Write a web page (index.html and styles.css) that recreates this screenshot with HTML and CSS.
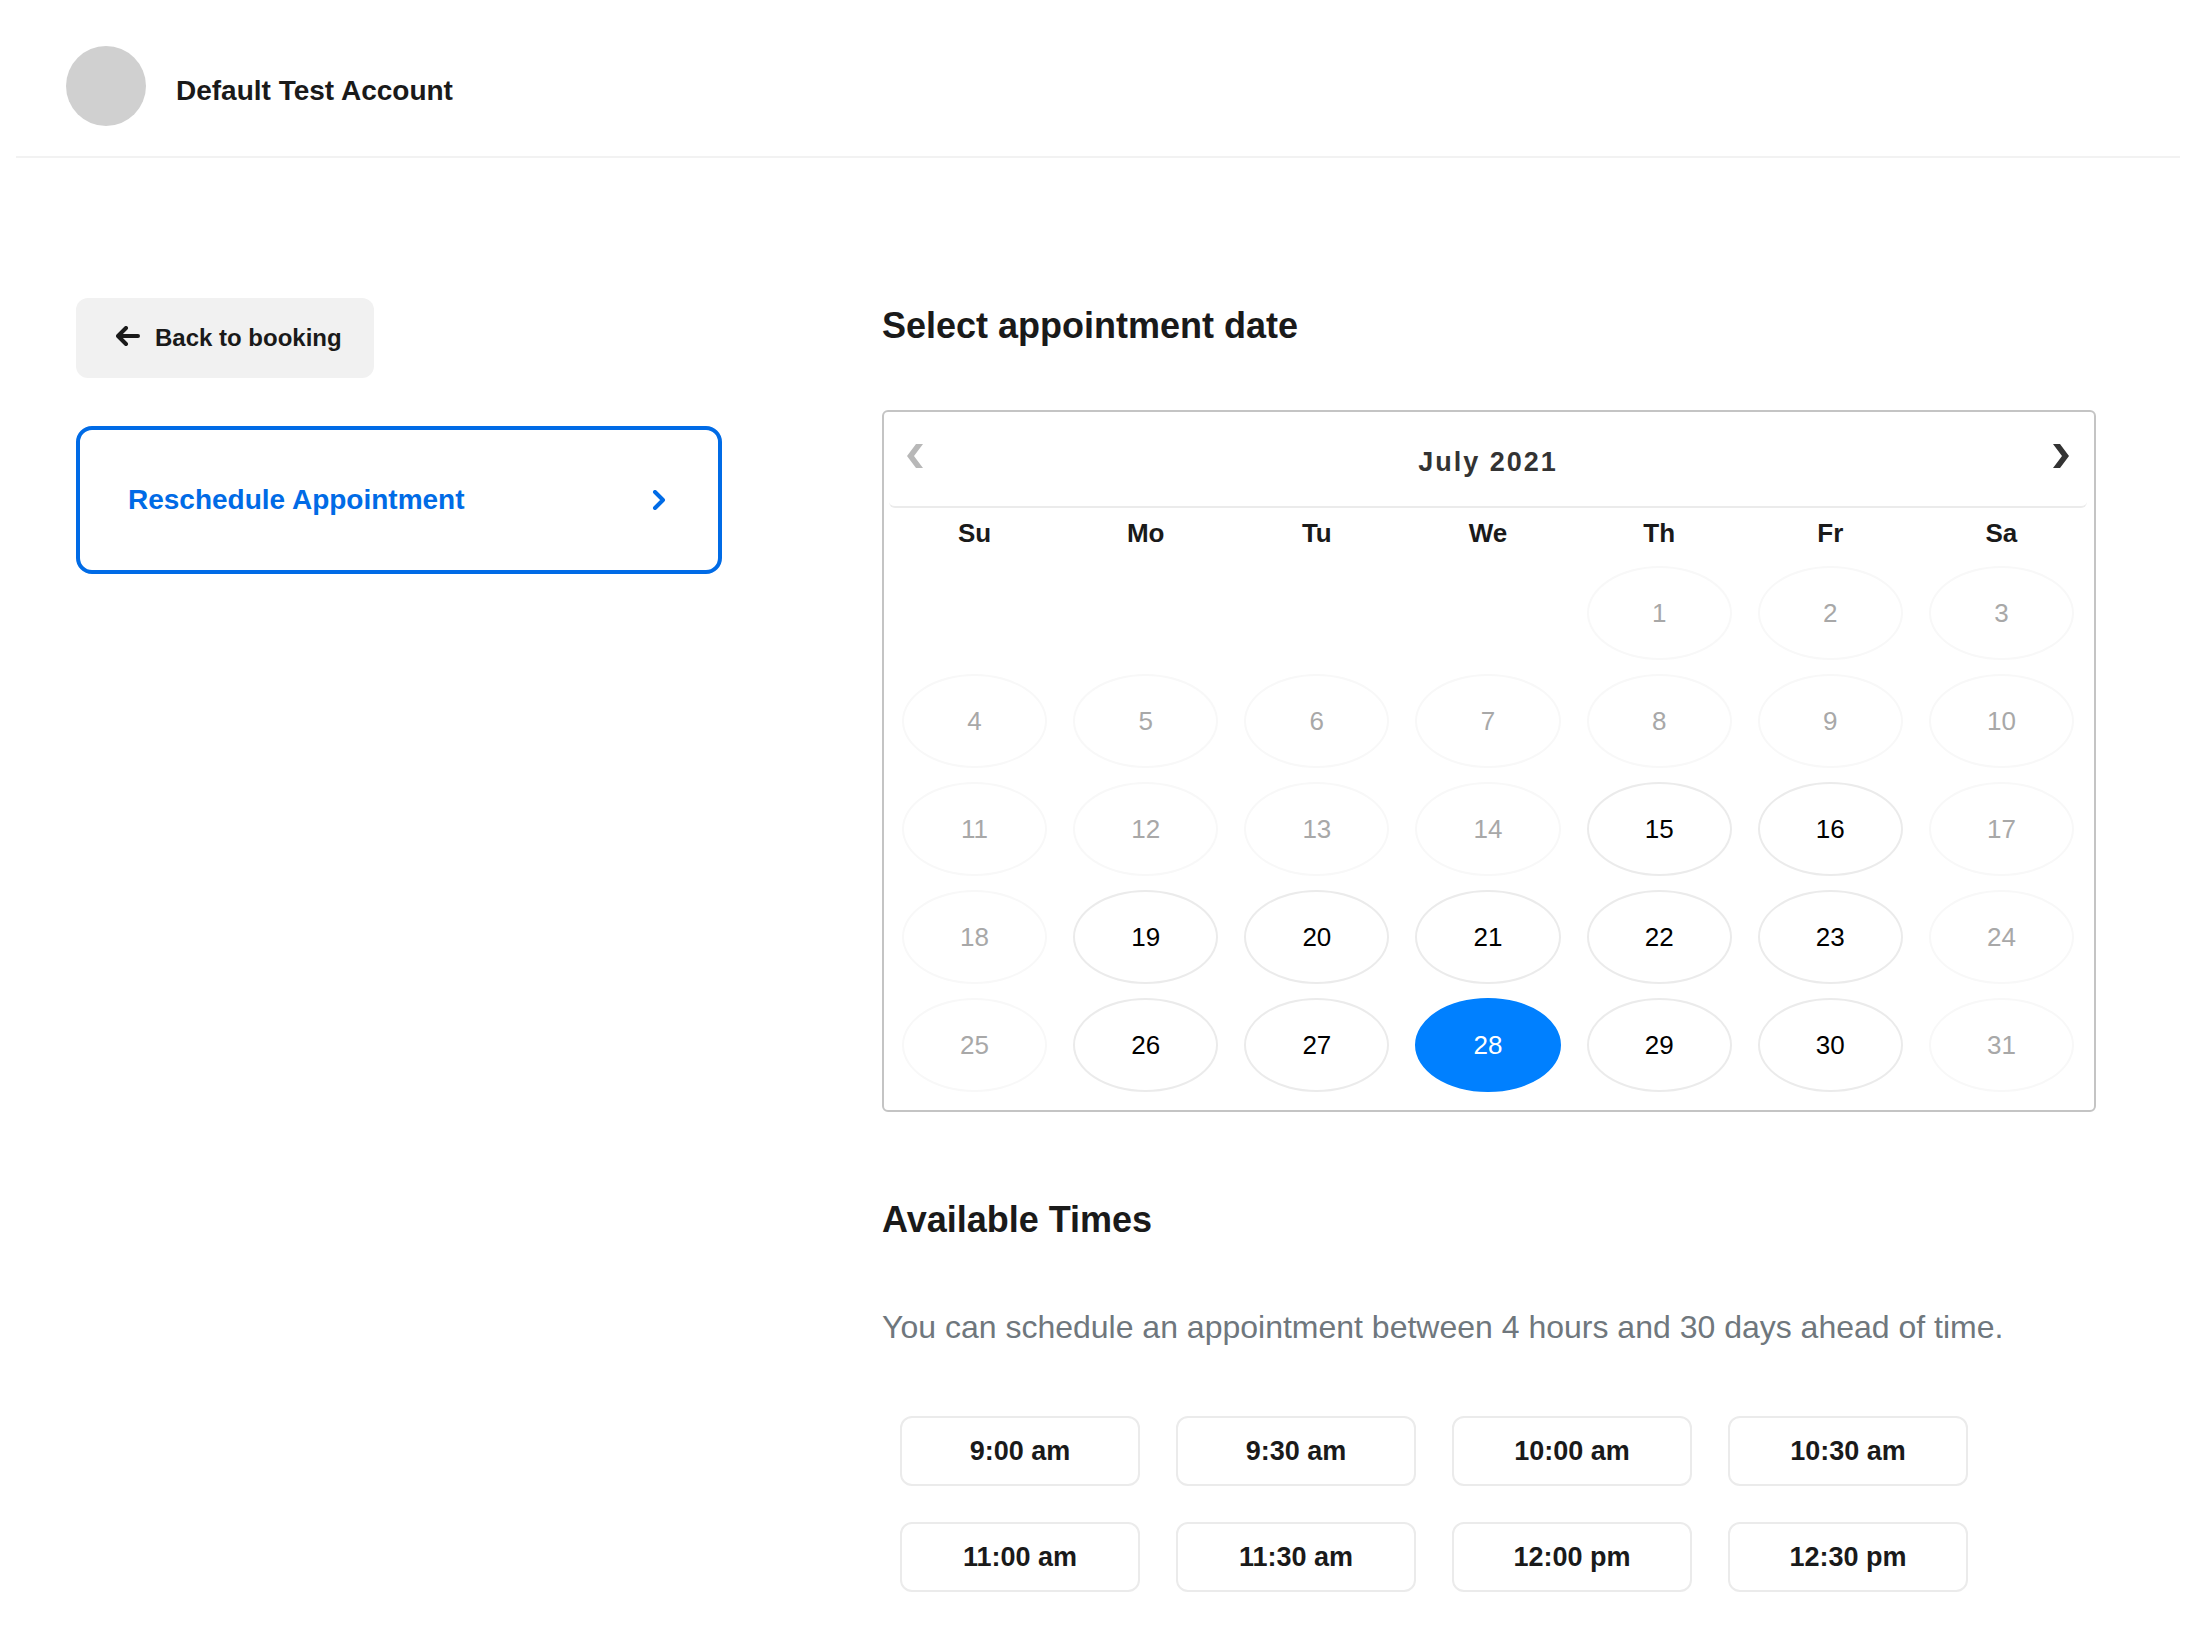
FILE: index.html
```html
<!DOCTYPE html>
<html lang="en">
<head>
  <meta charset="utf-8">
  <meta name="viewport" content="width=device-width, initial-scale=1">
  <title>Reschedule Appointment</title>
  <link rel="stylesheet" href="styles.css">
</head>
<body>
  <header class="site-header">
    <div class="avatar"></div>
    <p class="account-name">Default Test Account</p>
  </header>

  <main class="layout">
    <aside class="sidebar">
      <button type="button" class="back-button">
        <svg width="24" height="24" viewBox="0 0 24 24" fill="none" stroke="currentColor" stroke-width="4" stroke-linecap="round" stroke-linejoin="round" aria-hidden="true"><path d="M22 10H3M10 2L2 10l8 8"/></svg>
        Back to booking
      </button>
      <button type="button" class="action-card">
        <span>Reschedule Appointment</span>
        <svg width="14" height="20" viewBox="0 0 14 20" fill="none" stroke="currentColor" stroke-width="4" stroke-linecap="round" stroke-linejoin="round" aria-hidden="true"><path d="M3 2l8 8-8 8"/></svg>
      </button>
    </aside>

    <section class="booking">
      <h1 class="heading">Select appointment date</h1>

      <div class="calendar">
        <div class="calendar-header">
          <button type="button" class="month-nav" aria-label="Previous month" disabled>
            <svg width="16" height="24" viewBox="0 0 16 24" fill="currentColor" aria-hidden="true"><path d="M9 0h7L7 12l9 12H9L0 12z"/></svg>
          </button>
          <h2 class="month-title">July 2021</h2>
          <button type="button" class="month-nav" aria-label="Next month">
            <svg width="16" height="24" viewBox="0 0 16 24" fill="currentColor" aria-hidden="true"><path d="M7 0H0l9 12L0 24h7l9-12z"/></svg>
          </button>
        </div>
        <table class="days">
          <thead>
            <tr><th scope="col">Su</th><th scope="col">Mo</th><th scope="col">Tu</th><th scope="col">We</th><th scope="col">Th</th><th scope="col">Fr</th><th scope="col">Sa</th></tr>
          </thead>
          <tbody>
            <tr>
              <td></td><td></td><td></td><td></td>
              <td><button type="button" class="day" disabled>1</button></td>
              <td><button type="button" class="day" disabled>2</button></td>
              <td><button type="button" class="day" disabled>3</button></td>
            </tr>
            <tr>
              <td><button type="button" class="day" disabled>4</button></td>
              <td><button type="button" class="day" disabled>5</button></td>
              <td><button type="button" class="day" disabled>6</button></td>
              <td><button type="button" class="day" disabled>7</button></td>
              <td><button type="button" class="day" disabled>8</button></td>
              <td><button type="button" class="day" disabled>9</button></td>
              <td><button type="button" class="day" disabled>10</button></td>
            </tr>
            <tr>
              <td><button type="button" class="day" disabled>11</button></td>
              <td><button type="button" class="day" disabled>12</button></td>
              <td><button type="button" class="day" disabled>13</button></td>
              <td><button type="button" class="day" disabled>14</button></td>
              <td><button type="button" class="day">15</button></td>
              <td><button type="button" class="day">16</button></td>
              <td><button type="button" class="day" disabled>17</button></td>
            </tr>
            <tr>
              <td><button type="button" class="day" disabled>18</button></td>
              <td><button type="button" class="day">19</button></td>
              <td><button type="button" class="day">20</button></td>
              <td><button type="button" class="day">21</button></td>
              <td><button type="button" class="day">22</button></td>
              <td><button type="button" class="day">23</button></td>
              <td><button type="button" class="day" disabled>24</button></td>
            </tr>
            <tr>
              <td><button type="button" class="day" disabled>25</button></td>
              <td><button type="button" class="day">26</button></td>
              <td><button type="button" class="day">27</button></td>
              <td><button type="button" class="day day-selected" aria-pressed="true">28</button></td>
              <td><button type="button" class="day">29</button></td>
              <td><button type="button" class="day">30</button></td>
              <td><button type="button" class="day" disabled>31</button></td>
            </tr>
          </tbody>
        </table>
      </div>

      <h2 class="heading times-heading">Available Times</h2>
      <p class="times-note">You can schedule an appointment between 4 hours and 30 days ahead of time.</p>
      <div class="times">
        <button type="button" class="time">9:00 am</button>
        <button type="button" class="time">9:30 am</button>
        <button type="button" class="time">10:00 am</button>
        <button type="button" class="time">10:30 am</button>
        <button type="button" class="time">11:00 am</button>
        <button type="button" class="time">11:30 am</button>
        <button type="button" class="time">12:00 pm</button>
        <button type="button" class="time">12:30 pm</button>
      </div>
    </section>
  </main>
</body>
</html>
```
FILE: styles.css
```css
* {
  box-sizing: border-box;
}

body {
  margin: 0;
  background: #fff;
  color: #1a1a1a;
  font-family: "Helvetica Neue", "Liberation Sans", Arial, sans-serif;
}

h1,
h2,
p {
  margin: 0;
}

button {
  margin: 0;
  padding: 0;
  border: 0;
  background: none;
  color: inherit;
  font: inherit;
  cursor: pointer;
}

button:disabled {
  cursor: default;
}

svg {
  display: block;
  flex: none;
}

/* Header */

.site-header {
  display: flex;
  align-items: center;
  gap: 30px;
  margin: 0 16px;
  padding: 46px 50px 30px;
  border-bottom: 2px solid #f2f2f2;
}

.avatar {
  flex: none;
  width: 80px;
  height: 80px;
  border-radius: 50%;
  background: #d0d0d0;
}

.account-name {
  padding-top: 10px;
  font-size: 28px;
  font-weight: 700;
  line-height: 32px;
}

/* Columns */

.layout {
  display: grid;
  grid-template-columns: 646fr 1214fr;
  column-gap: 160px;
  padding: 140px 100px 32px 76px;
}

.sidebar {
  display: flex;
  flex-direction: column;
  align-items: flex-start;
  gap: 48px;
}

.back-button {
  display: flex;
  align-items: center;
  gap: 15px;
  height: 80px;
  padding: 0 32px 0 40px;
  border-radius: 12px;
  background: #f1f1f1;
  font-size: 24px;
  font-weight: 700;
}

.action-card {
  display: flex;
  align-items: center;
  justify-content: space-between;
  width: 100%;
  height: 148px;
  padding: 0 52px 0 48px;
  border: 4px solid #006be6;
  border-radius: 16px;
  color: #006be6;
  font-size: 28px;
  font-weight: 700;
}

.heading {
  font-size: 36px;
  font-weight: 700;
  line-height: 56px;
}

/* Calendar */

.calendar {
  margin-top: 56px;
  padding: 0 7px 11px 5px;
  border: 2px solid #c4c4c4;
  border-radius: 6px;
}

.calendar-header {
  display: flex;
  align-items: center;
  justify-content: space-between;
  height: 96px;
  padding: 0 18px;
  border-bottom: 2px solid #ebebeb;
  border-radius: 6px;
}

.month-nav {
  padding-bottom: 6px;
  color: #333;
}

.month-nav:disabled {
  color: #b8b8b8;
}

.month-title {
  padding-top: 6px;
  color: #333;
  font-size: 27px;
  font-weight: 700;
  line-height: 32px;
  letter-spacing: 2px;
}

.days {
  width: 100%;
  table-layout: fixed;
  border-collapse: collapse;
  font-size: 26px;
}

.days th {
  height: 51px;
  padding: 0;
  font-weight: 700;
}

.days td {
  padding: 7px 13px;
}

.day {
  display: block;
  width: 100%;
  height: 94px;
  border: 2px solid #ebebeb;
  border-radius: 50%;
  color: #000;
}

.day:disabled {
  border-color: #f8f8f8;
  color: #a8a8a8;
}

.day-selected {
  border-color: #0080ff;
  background: #0080ff;
  color: #fff;
}

/* Times */

.times-heading {
  margin-top: 80px;
}

.times-note {
  margin-top: 56px;
  color: #6f777d;
  font-size: 32px;
  line-height: 46px;
}

.times {
  display: grid;
  grid-template-columns: repeat(auto-fill, 240px);
  gap: 36px;
  margin-top: 66px;
  padding-left: 18px;
}

.time {
  height: 70px;
  border: 2px solid #ebebeb;
  border-radius: 12px;
  font-size: 27px;
  font-weight: 700;
}
```
